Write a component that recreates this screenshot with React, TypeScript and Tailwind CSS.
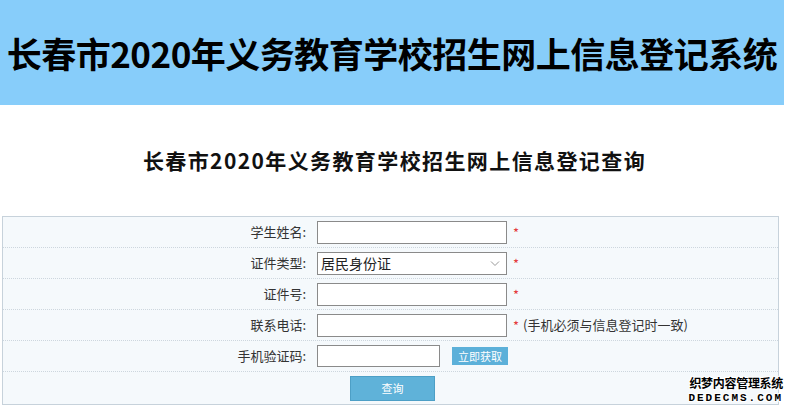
import React from 'react';

const sans = { fontFamily: '"Microsoft YaHei", "Noto Sans CJK SC", sans-serif' };

const Row: React.FC<{ label: string; children: React.ReactNode }> = ({ label, children }) => (
  <div className="flex items-center h-[31px] border-b border-dotted border-[#cdd6de]">
    <div className="w-[303px] text-right text-[13px] text-[#333]">{label}</div>
    <div className="flex items-center pl-[11px]">{children}</div>
  </div>
);

const Star = () => <span className="ml-[6px] text-[13px] text-[#e4393c] leading-none">*</span>;

const App: React.FC = () => {
  return (
    <div className="relative w-[791px] h-[414px] bg-white overflow-hidden" style={sans}>
      {/* Top banner */}
      <div className="w-[784px] h-[105px] bg-[#87cdfa] flex items-center justify-center">
        <h1 className="text-[35px] font-bold text-black tracking-[-0.5px] leading-none">
          长春市2020年义务教育学校招生网上信息登记系统
        </h1>
      </div>

      {/* Subtitle */}
      <div className="h-[111px] flex items-center justify-center pr-[2px]">
        <h2
          className="text-[21px] font-semibold text-[#111] tracking-[1.4px] leading-none mt-[-1px]"
          style={{ fontFamily: '"KaiTi", "Noto Sans CJK SC", serif' }}
        >
          长春市2020年义务教育学校招生网上信息登记查询
        </h2>
      </div>

      {/* Form table */}
      <div className="ml-[2px] w-[777px] border border-[#c7d2db] bg-[#f5f9fc]">
        <Row label="学生姓名:">
          <input className="w-[190px] h-[23px] border border-[#8a8a8a] bg-white" />
          <Star />
        </Row>
        <Row label="证件类型:">
          <div className="relative w-[190px] h-[23px] border border-[#8a8a8a] bg-white flex items-center pl-[3px] text-[14px] text-[#222]">
            居民身份证
            <svg className="absolute right-[6px] top-[7px]" width="10" height="7" viewBox="0 0 10 7" fill="none" stroke="#999" strokeWidth="1">
              <path d="M1 1.5l4 4 4-4" />
            </svg>
          </div>
          <Star />
        </Row>
        <Row label="证件号:">
          <input className="w-[190px] h-[23px] border border-[#8a8a8a] bg-white" />
          <Star />
        </Row>
        <Row label="联系电话:">
          <input className="w-[190px] h-[23px] border border-[#8a8a8a] bg-white" />
          <Star />
          <span className="ml-[4px] text-[13px] text-[#333]">(手机必须与信息登记时一致)</span>
        </Row>
        <Row label="手机验证码:">
          <input className="w-[123px] h-[22px] border border-[#8a8a8a] bg-white" />
          <button className="ml-[12px] w-[56px] h-[18px] bg-[#5cb0d9] text-white text-[11px] leading-none">
            立即获取
          </button>
        </Row>
        <div className="h-[32px] flex items-center">
          <button className="ml-[347px] w-[85px] h-[25px] bg-[#5fb2d9] border border-[#4d9fc6] text-white text-[11px] leading-none">
            查询
          </button>
        </div>
      </div>

      {/* Watermark */}
      <div className="absolute right-[8px] bottom-[10px] flex flex-col items-end leading-none">
        <span
          className="text-[12px] font-bold text-black tracking-[-0.3px]"
          style={{ textShadow: '1px 1px 0 #fff, -1px -1px 0 #fff, 1px -1px 0 #fff, -1px 1px 0 #fff' }}
        >
          织梦内容管理系统
        </span>
        <span
          className="mt-[4px] text-[11px] font-bold text-black tracking-[2px]"
          style={{ fontFamily: '"Liberation Mono", monospace', textShadow: '1px 1px 0 #fff, -1px -1px 0 #fff, 1px -1px 0 #fff, -1px 1px 0 #fff' }}
        >
          DEDECMS.COM
        </span>
      </div>
    </div>
  );
};

export default App;
